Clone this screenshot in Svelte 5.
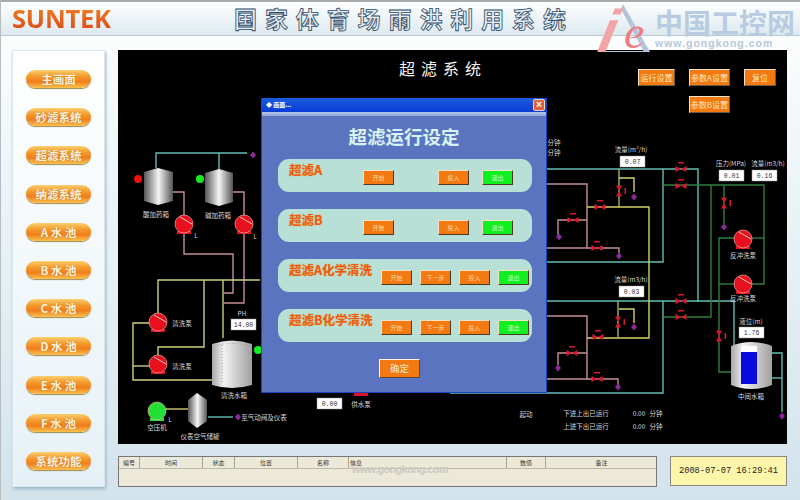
<script>
  const menu = ['主画面', '砂滤系统', '超滤系统', '纳滤系统', 'A 水 池', 'B 水 池', 'C 水 池', 'D 水 池', 'E 水 池', 'F 水 池', '系统功能'];

  const columns = [
    { name: '编号', width: 21 },
    { name: '时间', width: 63 },
    { name: '状态', width: 32 },
    { name: '位置', width: 63 },
    { name: '名称', width: 51 },
    { name: '信息', width: 158, left: true },
    { name: '数值', width: 39 },
    { name: '备注', width: 111 }
  ];

  const rows = [
    { title: '超滤A', actions: ['开始', '投入', '退出'] },
    { title: '超滤B', actions: ['开始', '投入', '退出'] },
    { title: '超滤A化学清洗', actions: ['开始', '下一步', '投入', '退出'], wide: true },
    { title: '超滤B化学清洗', actions: ['开始', '下一步', '投入', '退出'], wide: true }
  ];

  const pipes = [
    { color: '#63bdb4', points: '156,168 156,153 247,153' },
    { color: '#63bdb4', points: '219,170 219,153' },
    { color: '#c58f95', points: '173,192 184,192 184,216' },
    { color: '#c58f95', points: '184,232 184,254 233,254 233,293 224,293' },
    { color: '#c58f95', points: '233,192 244,192 244,216' },
    { color: '#c58f95', points: '244,232 244,303 224,303' },
    { color: '#cfcf78', points: '260,280 158,280 158,314' },
    { color: '#cfcf78', points: '204,280 204,347 158,347 158,356' },
    { color: '#cfcf78', points: '223,280 223,338' },
    { color: '#cfcf78', points: '150,323 133,323 133,380 212,380' },
    { color: '#cfcf78', points: '133,366 150,366' },
    { color: '#cfcf78', points: '165,409 190,409' },
    { color: '#63bdb4', points: '208,417 233,417' },
    { color: '#63bdb4', points: '547,169 698,169 698,302' },
    { color: '#63bdb4', points: '663,169 663,262 547,262' },
    { color: '#63bdb4', points: '547,301 734,301 734,345' },
    { color: '#63bdb4', points: '663,301 663,393 450,393' },
    { color: '#63bdb4', points: '772,353 782,353 782,412' },
    { color: '#63bdb4', points: '772,378 782,378' },
    { color: '#c58f95', points: '547,184 587,184 587,248 547,248' },
    { color: '#c58f95', points: '587,248 619,248 619,254' },
    { color: '#c58f95', points: '558,235 558,220 587,220' },
    { color: '#c58f95', points: '547,316 587,316 587,379 547,379' },
    { color: '#c58f95', points: '587,379 618,379 618,385' },
    { color: '#c58f95', points: '558,365 558,353 587,353' },
    { color: '#a8b060', points: '619,169 619,207' },
    { color: '#d2d265', points: '587,207 649,207 649,338 587,338' },
    { color: '#d2d265', points: '619,178 634,178 634,192' },
    { color: '#a8b060', points: '618,301 618,338' },
    { color: '#d2d265', points: '619,309 634,309 634,323' },
    { color: '#2f7d3f', points: '663,185 764,185 764,284 752,284' },
    { color: '#2f7d3f', points: '711,185 711,317 663,317' },
    { color: '#2f7d3f', points: '724,185 724,224' },
    { color: '#2f7d3f', points: '735,238 719,238 719,372 732,372' },
    { color: '#2f7d3f', points: '719,284 735,284' },
    { color: '#2f7d3f', points: '752,238 764,238' }
  ];

  const valves = [
    { x: 600, y: 207 }, { x: 573, y: 220 }, { x: 597, y: 248 },
    { x: 681, y: 169 }, { x: 681, y: 186 }, { x: 681, y: 301 }, { x: 681, y: 317 },
    { x: 598, y: 337 }, { x: 572, y: 353 }, { x: 597, y: 379 },
    { x: 619, y: 191, turned: true }, { x: 724, y: 203, turned: true },
    { x: 618, y: 322, turned: true }, { x: 719, y: 336, turned: true }
  ];

  const drains = [
    { x: 253, y: 155 }, { x: 238, y: 417 }, { x: 634, y: 197 }, { x: 724, y: 227 },
    { x: 559, y: 237 }, { x: 619, y: 256 }, { x: 634, y: 327 }, { x: 558, y: 368 },
    { x: 618, y: 387 }, { x: 782, y: 416 }
  ];

  const pumps = [
    { x: 184, y: 224 }, { x: 244, y: 224 }, { x: 158, y: 322 }, { x: 158, y: 364 },
    { x: 743, y: 239 }, { x: 743, y: 284 }
  ];

  const labels = [
    { x: 156, y: 217, text: '酸加药箱' }, { x: 218, y: 218, text: '碱加药箱' },
    { x: 196, y: 238, text: 'L' }, { x: 255, y: 239, text: 'L' },
    { x: 182, y: 326, text: '清洗泵' }, { x: 182, y: 369, text: '清洗泵' },
    { x: 242, y: 316, text: 'PH' }, { x: 234, y: 398, text: '清洗水箱' },
    { x: 157, y: 430, text: '空压机' }, { x: 170, y: 422, text: 'L' },
    { x: 200, y: 439, text: '仪表空气储罐' }, { x: 264, y: 420, text: '至气动阀及仪表' },
    { x: 361, y: 407, text: '供水泵' },
    { x: 554, y: 145, text: '分钟' }, { x: 554, y: 155, text: '分钟' },
    { x: 631, y: 152, text: '流量(m³/h)' }, { x: 631, y: 282, text: '流量(m3/h)' },
    { x: 731, y: 166, text: '压力(MPa)' }, { x: 768, y: 166, text: '流量(m3/h)' },
    { x: 743, y: 258, text: '反冲洗泵' }, { x: 743, y: 301, text: '反冲洗泵' },
    { x: 751, y: 324, text: '液位(m)' }, { x: 751, y: 399, text: '中间水箱' },
    { x: 526, y: 417, text: '起动' }, { x: 586, y: 416, text: '下进上出已运行' },
    { x: 586, y: 429, text: '上进下出已运行' }, { x: 639, y: 416, text: '0.00' },
    { x: 639, y: 429, text: '0.00' }, { x: 656, y: 416, text: '分钟' }, { x: 656, y: 429, text: '分钟' }
  ];

  const readouts = [
    { x: 231, y: 319, value: '14.00' }, { x: 317, y: 398, value: '0.00' },
    { x: 620, y: 156, value: '0.07' }, { x: 619, y: 286, value: '0.03' },
    { x: 719, y: 170, value: '0.01' }, { x: 752, y: 170, value: '0.16' },
    { x: 739, y: 327, value: '1.76' }
  ];
</script>

{#snippet pump(x, y, fill)}
  <g transform="translate({x} {y})">
    <rect x="-7" y="7" width="14" height="3" fill={fill} />
    <circle r="9" fill={fill} stroke="#f2b0a8" stroke-width="0.7" />
    {#if fill !== '#22e034'}
      <path d="M-4 -7 L8 0" stroke="#ffc8c0" stroke-width="1" />
    {/if}
  </g>
{/snippet}

<div class="screen">
  <header class="header">
    <div class="brand">SUNTEK</div>
    <h1 class="title">国家体育场雨洪利用系统</h1>
    <div class="logo">
      <svg class="logo-mark" width="62" height="62" viewBox="-6 -6 62 62">
        <path d="M25 0 L52 48 L46 48 L23 5 Z" fill="#b4c4da" />
        <path d="M0 47.5 H52" stroke="#b4c4da" stroke-width="1.2" />
        <text transform="translate(-5 48) skewX(-22)" class="logo-i">i</text>
        <text x="26" y="44" class="logo-e">e</text>
      </svg>
      <div class="logo-text">
        <span class="logo-cn">中国工控网</span>
        <span class="logo-url">www.gongkong.com</span>
      </div>
    </div>
  </header>

  <div class="body">
    <nav class="sidebar">
      {#each menu as item}
        <button class="menu-btn">{item}</button>
      {/each}
    </nav>

    <main class="main">
      <section class="canvas">
        <svg class="diagram" width="669" height="394" viewBox="118 50 669 394">
          <defs>
            <linearGradient id="steel" x1="0" x2="1" y1="0" y2="0">
              <stop offset="0" stop-color="#555" />
              <stop offset="0.5" stop-color="#f4f4f4" />
              <stop offset="1" stop-color="#555" />
            </linearGradient>
            <linearGradient id="drum" x1="0" x2="1" y1="0" y2="0">
              <stop offset="0" stop-color="#a8a8a8" />
              <stop offset="0.3" stop-color="#f2f2f2" />
              <stop offset="1" stop-color="#a0a0a0" />
            </linearGradient>
          </defs>

          {#each pipes as pipe}
            <polyline points={pipe.points} fill="none" stroke={pipe.color} stroke-width="1.4" />
          {/each}

          <!-- tanks -->
          <path d="M144 172 L158 168 L173 172 V201 L158 205 L144 201 Z" fill="url(#steel)" />
          <path d="M205 173 L219 169 L233 173 V202 L219 206 L205 202 Z" fill="url(#steel)" />
          <path d="M188 400 L197 393 L207 400 V421 L197 428 L188 421 Z" fill="url(#steel)" />
          <path d="M212 344 Q232 337 252 344 V385 Q232 391 212 385 Z" fill="url(#drum)" />
          <path d="M222 345 V384" stroke="#777" stroke-width="0.6" stroke-dasharray="1 2" />
          <path d="M214 346 Q232 341 250 346" fill="none" stroke="#777" stroke-width="0.6" stroke-dasharray="1 2" />
          <path d="M731 346 Q751 338 772 346 V385 Q751 393 731 385 Z" fill="url(#drum)" />
          <rect x="741" y="346" width="16" height="6" fill="#fff" />
          <rect x="741" y="352" width="16" height="32" fill="#0a0ae0" />

          <circle cx="138" cy="179" r="4" fill="#f01010" />
          <circle cx="200" cy="179" r="4" fill="#12ee20" />
          <circle cx="258" cy="350" r="4" fill="#12ee20" />
          <rect x="354" y="393" width="14" height="3" fill="#e01020" />

          {#each pumps as p}
            {@render pump(p.x, p.y, '#e8101c')}
          {/each}
          {@render pump(157, 411, '#22e034')}

          {#each valves as v}
            <g transform="translate({v.x} {v.y}) rotate({v.turned ? 90 : 0})" fill="#d81830">
              <path d="M-5.5 -3 L0 0 L-5.5 3 Z M5.5 -3 L0 0 L5.5 3 Z" />
              <path d="M-3 -7 H3 V-5.5 H-3 Z" />
            </g>
          {/each}

          {#each drains as d}
            <path d="M{d.x - 3} {d.y} L{d.x} {d.y - 3.5} L{d.x + 3} {d.y} L{d.x} {d.y + 3.5} Z" fill="#8a2a9a" />
          {/each}

          {#each labels as l}
            <text x={l.x} y={l.y} class="label">{l.text}</text>
          {/each}

          {#each readouts as r}
            <rect x={r.x} y={r.y} width="25" height="11" fill="#fff" stroke="#999" stroke-width="0.5" />
            <text x={r.x + 12.5} y={r.y + 8} class="readout">{r.value}</text>
          {/each}
        </svg>

        <h2 class="canvas-title">超 滤 系 统</h2>

        <div class="top-actions">
          <button class="tool-btn run">运行设置</button>
          <button class="tool-btn">参数A设置</button>
          <button class="tool-btn reset">复位</button>
          <button class="tool-btn second">参数B设置</button>
        </div>

        <div class="dialog">
          <div class="dialog-bar">
            <span class="dialog-name">◆ 画面...</span>
            <span class="dialog-close">×</span>
          </div>
          <div class="dialog-strip"></div>
          <h3 class="dialog-title">超滤运行设定</h3>
          <div class="dialog-rows">
            {#each rows as row}
              <div class="row" class:wide={row.wide}>
                <span class="row-title">{row.title}</span>
                {#each row.actions as action}
                  <button class="act" class:exit={action === '退出'} class:start={action === '开始'}>{action}</button>
                {/each}
              </div>
            {/each}
          </div>
          <button class="confirm">确定</button>
        </div>
      </section>

      <div class="bottom">
        <div class="events">
          <div class="events-head">
            {#each columns as col}
              <span class="cell" class:left={col.left} style="width: {col.width}px">{col.name}</span>
            {/each}
          </div>
          <span class="watermark">www.gongkong.com</span>
        </div>
        <div class="clock">2008-07-07 16:29:41</div>
      </div>
    </main>
  </div>
</div>

<style>
  :global(body) {
    margin: 0;
  }

  .screen {
    width: 800px;
    height: 500px;
    display: flex;
    flex-direction: column;
    overflow: hidden;
    box-sizing: border-box;
    border-left: 1px solid #b8bcbc;
    background: linear-gradient(180deg, #ffffff 0%, #f0f6f9 30%, #d3e3ec 100%);
    font-family: "Liberation Sans", "Noto Sans CJK SC", sans-serif;
  }

  .header {
    height: 36px;
    flex: none;
    box-sizing: border-box;
    display: flex;
    align-items: flex-start;
    border-top: 2px solid #a8acaa;
    border-bottom: 1px solid #b9cbd4;
    background: linear-gradient(180deg, #ffffff 0%, #dde9ef 100%);
  }

  .brand {
    width: 221px;
    padding: 3px 0 0 11px;
    box-sizing: border-box;
    font: bold 25.5px/26px "Open Sans", sans-serif;
    letter-spacing: -0.2px;
    background: linear-gradient(180deg, #f08a20 0%, #e0481a 100%);
    -webkit-background-clip: text;
    background-clip: text;
    color: transparent;
  }

  .title {
    margin: 2px 0 0 12px;
    width: 350px;
    font: bold 23px/28px "Noto Sans CJK SC", sans-serif;
    letter-spacing: 7.9px;
    white-space: nowrap;
    color: #e6eef3;
    -webkit-text-stroke: 0.8px #2d4a68;
  }

  .logo {
    display: flex;
    margin-left: 8px;
    height: 50px;
    position: relative;
    z-index: 2;
  }

  .logo-mark {
    margin-top: -4px;
    flex: none;
    overflow: visible;
  }

  .logo-i {
    font: bold 60px "Liberation Sans", sans-serif;
    fill: #f2a4a6;
  }

  .logo-e {
    font: italic 46px "Liberation Serif", serif;
    fill: #ee7c80;
  }

  .logo-text {
    display: flex;
    flex-direction: column;
    margin-left: 1px;
    padding-top: 5px;
  }

  .logo-cn {
    font: bold 28px/30px "Noto Sans CJK SC", sans-serif;
    color: #b8cbe0;
    white-space: nowrap;
  }

  .logo-url {
    font: bold 10.5px/12px "Liberation Sans", sans-serif;
    letter-spacing: 1px;
    color: #b9c8d8;
  }

  .body {
    flex: 1;
    display: flex;
    padding: 14px 13px 13px 11px;
    min-height: 0;
  }

  .sidebar {
    width: 93px;
    flex: none;
    display: flex;
    flex-direction: column;
    align-items: center;
    gap: 20.2px;
    padding-top: 19px;
    box-sizing: border-box;
    background: linear-gradient(180deg, #ffffff 0%, #e6f1f7 100%);
    border: 1px solid #d8e6ee;
    box-shadow: 1px 2px 3px #9cb6c6;
  }

  .menu-btn {
    width: 65px;
    height: 18px;
    padding: 0;
    flex: none;
    border: none;
    border-radius: 9px;
    background: linear-gradient(180deg, #fbd070 0%, #f49a2c 35%, #f07e1c 65%, #fbc24e 100%);
    box-shadow: 0 1px 1px #9a8a58;
    color: #fff3dc;
    font: bold 11.5px/18px "Noto Sans CJK SC", sans-serif;
    text-shadow: 0 0 1px #b06a20;
  }

  .main {
    flex: 1;
    margin-left: 13px;
    display: flex;
    flex-direction: column;
    gap: 12px;
    min-width: 0;
  }

  .canvas {
    height: 394px;
    flex: none;
    position: relative;
    background: #000;
  }

  .diagram {
    display: block;
  }

  .label {
    font: 6.5px "Noto Sans CJK SC", sans-serif;
    fill: #d8d8d8;
    text-anchor: middle;
  }

  .readout {
    font: 6.5px "Liberation Mono", monospace;
    fill: #333;
    text-anchor: middle;
  }

  .canvas-title {
    position: absolute;
    left: 281px;
    top: 7px;
    margin: 0;
    font: 400 16px/22px "Noto Sans CJK SC", sans-serif;
    letter-spacing: 1.2px;
    color: #f4f4f4;
  }

  .top-actions {
    position: absolute;
    left: 520px;
    top: 19px;
    display: grid;
    grid-template-columns: 37px 41px 32px;
    grid-auto-rows: 17px;
    column-gap: 14px;
    row-gap: 10px;
  }

  .tool-btn {
    padding: 0;
    box-sizing: border-box;
    border: 1px solid;
    border-color: #f0e4d0 #6a5a40 #6a5a40 #f0e4d0;
    background: #f27a10;
    color: #ffe8c0;
    font: 8px/15px "Noto Sans CJK SC", sans-serif;
    white-space: nowrap;
  }

  .tool-btn.second {
    grid-column: 2;
  }

  .dialog {
    position: absolute;
    left: 143px;
    top: 48px;
    width: 286px;
    height: 295px;
    box-sizing: border-box;
    border: 1px solid #1848c0;
    border-top: none;
    background: #5a74bf;
  }

  .dialog-bar {
    height: 14px;
    display: flex;
    align-items: center;
    justify-content: space-between;
    padding: 0 1px 0 4px;
    background: linear-gradient(180deg, #1a5cdc 0%, #0a3cd8 100%);
  }

  .dialog-name {
    color: #fff;
    font: bold 6px/14px "Noto Sans CJK SC", sans-serif;
  }

  .dialog-close {
    width: 10px;
    height: 10px;
    background: #e0603c;
    border: 0.5px solid #f0d0c0;
    border-radius: 2px;
    color: #fff;
    font: bold 10px/9px "Liberation Sans", sans-serif;
    text-align: center;
  }

  .dialog-strip {
    height: 4px;
    background: linear-gradient(180deg, #b4c4ea 0%, #8fa4d8 100%);
  }

  .dialog-title {
    margin: 6px 0 0;
    height: 28px;
    text-align: center;
    font: bold 18.5px/28px "Noto Sans CJK SC", sans-serif;
    color: #d8f2f6;
  }

  .dialog-rows {
    margin: 9px 14px 0 16px;
    display: flex;
    flex-direction: column;
    gap: 17px;
  }

  .row {
    height: 33px;
    padding: 3px 0 0 11px;
    box-sizing: border-box;
    display: flex;
    align-items: flex-start;
    gap: 13px;
    border-radius: 11px;
    background: #b8e0d6;
  }

  .row.wide {
    gap: 8px;
  }

  .row-title {
    width: 61px;
    font: bold 12.5px/16px "Noto Sans CJK SC", sans-serif;
    white-space: nowrap;
    color: #ec5a18;
    text-shadow: 0 0 1px #f0a020;
  }

  .row.wide .row-title {
    width: 84px;
  }

  .act {
    width: 31px;
    height: 15px;
    margin-top: 8px;
    padding: 0;
    flex: none;
    box-sizing: border-box;
    border: 1px solid;
    border-color: #f2e2cc #4a3a22 #4a3a22 #f2e2cc;
    background: #f27a10;
    color: #ffd8a8;
    font: 6px/13px "Noto Sans CJK SC", sans-serif;
  }

  .row:not(.wide) .act.start {
    margin-right: 31px;
  }

  .act.exit {
    background: #10f020;
    color: #c8ffc8;
  }

  .confirm {
    display: block;
    width: 41px;
    height: 19px;
    margin: 17px auto 0 117px;
    padding: 0;
    box-sizing: border-box;
    border: 1px solid;
    border-color: #fff2e0 #5a4a30 #5a4a30 #fff2e0;
    background: #f27a10;
    color: #ffe8cc;
    font: 9.5px/17px "Noto Sans CJK SC", sans-serif;
  }

  .bottom {
    height: 31px;
    display: flex;
    gap: 13px;
  }

  .events {
    width: 539px;
    position: relative;
    box-sizing: border-box;
    border: 1px solid #777;
    background: #ece9d8;
  }

  .events-head {
    display: flex;
    height: 11px;
    border-bottom: 1px solid #bdbaa8;
  }

  .cell {
    flex: none;
    box-sizing: border-box;
    border-right: 1px solid #a8a594;
    text-align: center;
    color: #333;
    font: 6px/11px "Noto Sans CJK SC", sans-serif;
  }

  .cell.left {
    text-align: left;
    padding-left: 1px;
  }

  .cell:last-child {
    border-right: none;
  }

  .watermark {
    position: absolute;
    left: 233px;
    top: 9px;
    font: bold 10.5px/6px "Liberation Sans", sans-serif;
    letter-spacing: -0.4px;
    color: #c8cac2;
  }

  .clock {
    width: 117px;
    height: 30px;
    box-sizing: border-box;
    border: 1px solid #888;
    background: #fdf6aa;
    color: #222;
    text-align: center;
    font: 8.7px/28px "Liberation Mono", monospace;
    white-space: nowrap;
  }
</style>
